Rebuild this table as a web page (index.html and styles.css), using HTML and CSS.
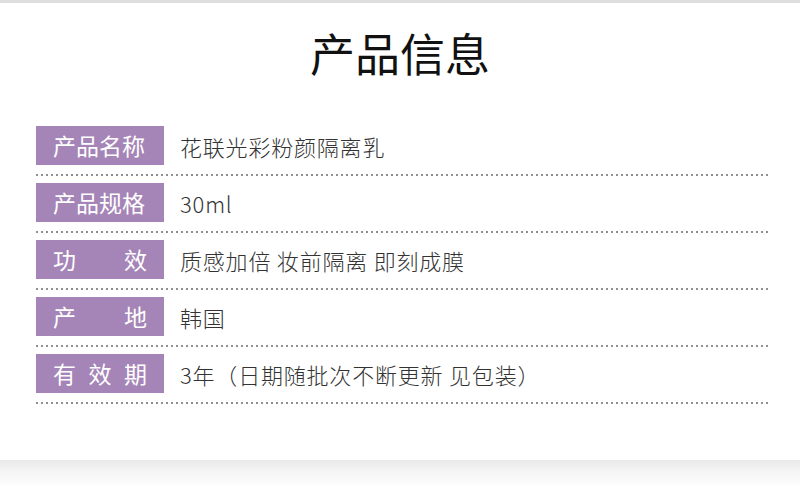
FILE: index.html
```html
<!DOCTYPE html>
<html lang="zh-CN">
<head>
<meta charset="utf-8">
<title>产品信息</title>
<link rel="stylesheet" href="styles.css">
</head>
<body>
<div class="page">
  <div class="card">
    <h1 class="title">产品信息</h1>
    <div class="rows">
      <div class="row">
        <div class="line">
          <div class="label"><span>产品名称</span></div>
          <div class="value">花联光彩粉颜隔离乳</div>
        </div>
        <div class="dots"></div>
      </div>
      <div class="row">
        <div class="line">
          <div class="label"><span>产品规格</span></div>
          <div class="value">30ml</div>
        </div>
        <div class="dots"></div>
      </div>
      <div class="row">
        <div class="line">
          <div class="label"><span>功</span><span>效</span></div>
          <div class="value">质感加倍 妆前隔离 即刻成膜</div>
        </div>
        <div class="dots"></div>
      </div>
      <div class="row">
        <div class="line">
          <div class="label"><span>产</span><span>地</span></div>
          <div class="value">韩国</div>
        </div>
        <div class="dots"></div>
      </div>
      <div class="row">
        <div class="line">
          <div class="label"><span>有</span><span>效</span><span>期</span></div>
          <div class="value">3年（日期随批次不断更新 见包装）</div>
        </div>
        <div class="dots"></div>
      </div>
    </div>
  </div>
  <div class="shadow"></div>
</div>
</body>
</html>
```

FILE: styles.css
```css
* { box-sizing: border-box; }
html, body { margin: 0; padding: 0; background: #ffffff; }
body {
  font-family: "Noto Sans CJK SC", "Noto Sans", sans-serif;
  width: 800px;
  height: 486px;
  overflow: hidden;
}
.page {
  display: flex;
  flex-direction: column;
  height: 486px;
}
.card {
  height: 460px;
  background: #ffffff;
  border-top: 3px solid #dedede;
  padding-top: 27px;
}
.title {
  margin: 0;
  text-align: center;
  font-size: 45px;
  line-height: 45px;
  font-weight: 400;
  color: #111111;
}
.rows {
  margin: 51px 0 0 36px;
  width: 732px;
  display: flex;
  flex-direction: column;
}
.row {
  display: flex;
  flex-direction: column;
  padding-bottom: 7px;
}
.line {
  display: flex;
  align-items: center;
  height: 39px;
}
.label {
  width: 128px;
  height: 39px;
  background: #a585b7;
  color: #ffffff;
  font-size: 23px;
  line-height: 39px;
  display: flex;
  justify-content: space-between;
  padding: 0 17px;
  font-weight: 400;
}
.value {
  margin-left: 16px;
  font-size: 22px;
  color: #333333;
  font-weight: 300;
  letter-spacing: 0.8px;
}
.dots {
  margin-top: 9px;
  height: 2px;
  width: 732px;
  background-image: radial-gradient(circle at 1px 1px, #8f8f8f 0.9px, rgba(255,255,255,0) 1.3px);
  background-size: 5px 2px;
  background-repeat: repeat-x;
}
.shadow {
  flex: 1;
  background: linear-gradient(to bottom, #e9e9e9 0%, #f6f6f6 50%, #fdfdfd 100%);
}
```
